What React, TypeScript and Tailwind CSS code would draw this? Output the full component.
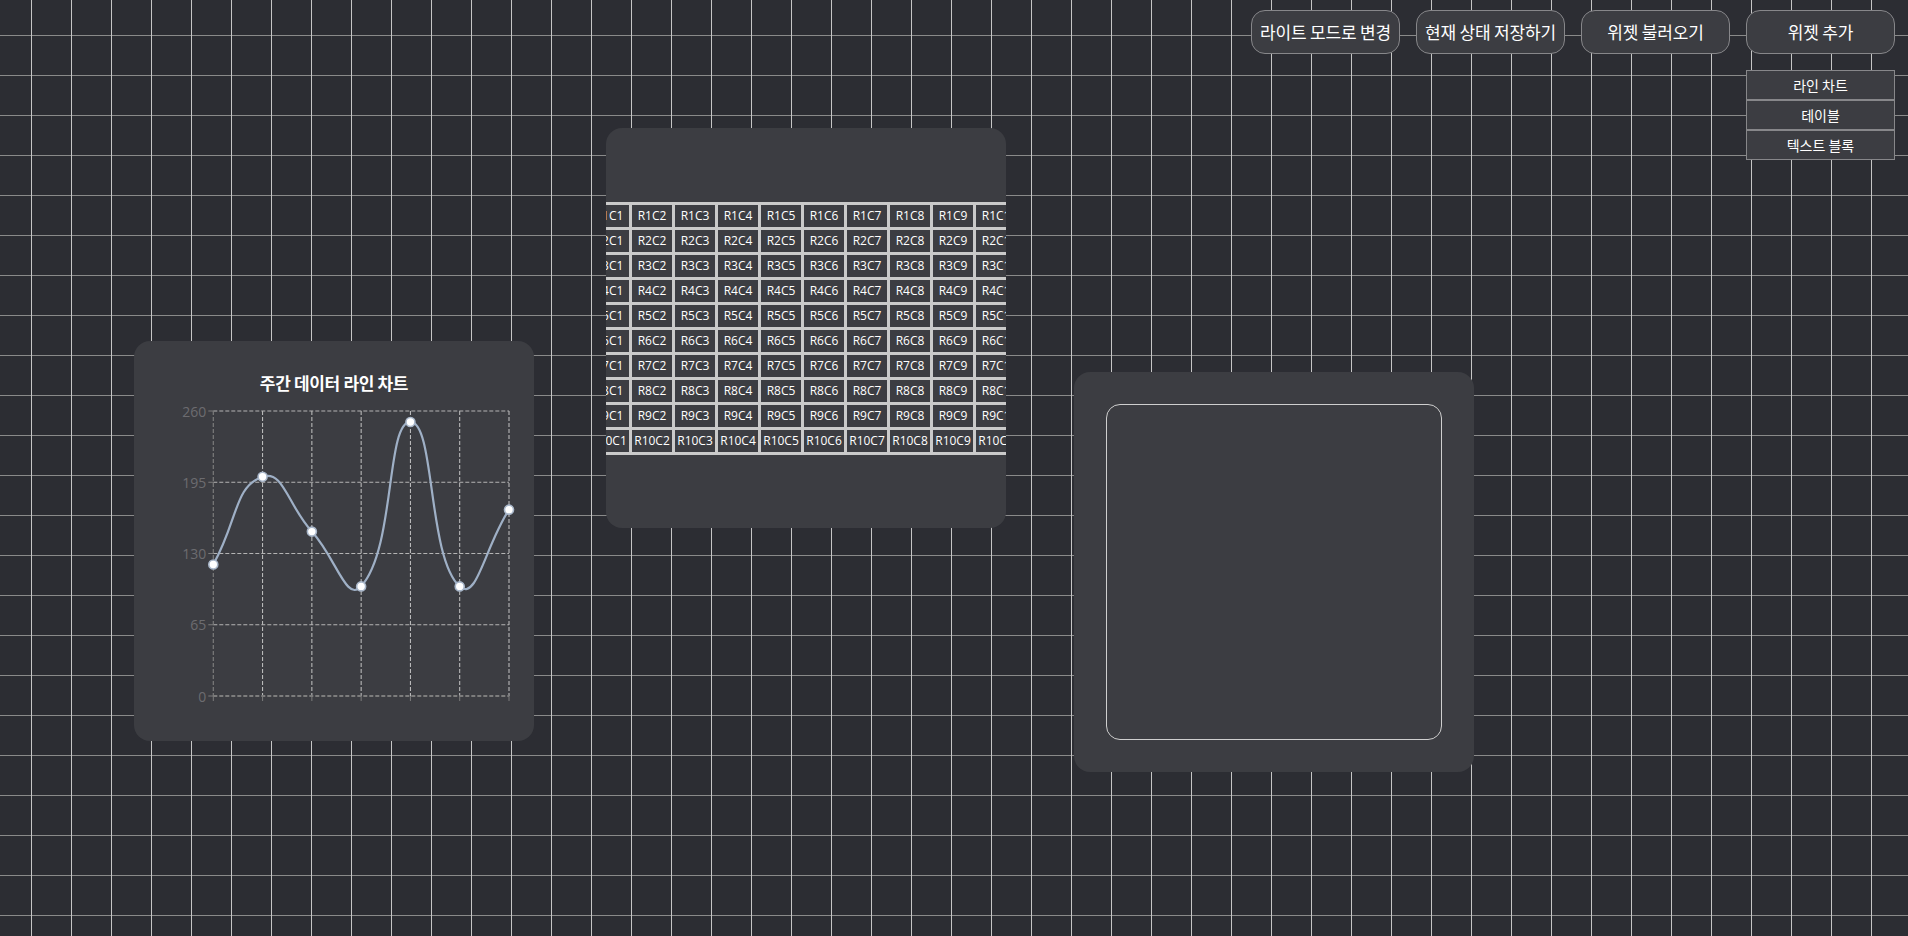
import React from 'react';

const WEEK_DATA = [120, 200, 150, 100, 250, 100, 170];
const Y_TICKS = [0, 65, 130, 195, 260];

// plot box inside the chart svg (svg sits under the title)
const PLOT = { left: 79.3, right: 375, top: 14, bottom: 299 };

type Pt = [number, number];

function smoothPath(pts: Pt[], smooth = 0.5) {
  const cps = pts.map((p, i) => {
    const prev = pts[i - 1] ?? p;
    const next = pts[i + 1] ?? p;
    const vx = next[0] - prev[0];
    const vy = next[1] - prev[1];
    let d0 = Math.hypot(p[0] - prev[0], p[1] - prev[1]);
    let d1 = Math.hypot(p[0] - next[0], p[1] - next[1]);
    const sum = d0 + d1;
    if (sum) {
      d0 /= sum;
      d1 /= sum;
    }
    return {
      c0: [p[0] - vx * smooth * d0, p[1] - vy * smooth * d0] as Pt,
      c1: [p[0] + vx * smooth * d1, p[1] + vy * smooth * d1] as Pt,
    };
  });
  let d = `M${pts[0][0]},${pts[0][1]}`;
  for (let i = 1; i < pts.length; i++) {
    const a = cps[i - 1].c1;
    const b = cps[i].c0;
    d += ` C${a[0]},${a[1]} ${b[0]},${b[1]} ${pts[i][0]},${pts[i][1]}`;
  }
  return d;
}

const LineChartWidget: React.FC = () => {
  const step = (PLOT.right - PLOT.left) / (WEEK_DATA.length - 1);
  const yOf = (v: number) => PLOT.bottom - (v / 260) * (PLOT.bottom - PLOT.top);
  const xs = WEEK_DATA.map((_, i) => PLOT.left + i * step);
  const pts: Pt[] = WEEK_DATA.map((v, i) => [xs[i], yOf(v)]);

  return (
    <div className="absolute left-[134px] top-[341px] w-[400px] h-[400px] rounded-2xl bg-[#3c3d42] flex flex-col">
      <div className="pt-[30px] h-[56px] text-center text-[17px] leading-[24px] font-bold tracking-[-0.02em] text-white">
        주간 데이터 라인 차트
      </div>
      <svg width="400" height="344" className="block">
        {/* vertical split lines */}
        {xs.slice(1).map((x) => (
          <line key={`v${x}`} x1={x} y1={PLOT.top} x2={x} y2={PLOT.bottom} stroke="#c4c4c4" strokeWidth="1" strokeDasharray="4 2" />
        ))}
        {/* horizontal split lines */}
        {Y_TICKS.slice(1).map((t) => (
          <line key={`h${t}`} x1={PLOT.left} y1={yOf(t)} x2={PLOT.right} y2={yOf(t)} stroke="#b4b4b4" strokeWidth="1" strokeDasharray="4 2" />
        ))}
        {/* axes */}
        <line x1={PLOT.left} y1={PLOT.top} x2={PLOT.left} y2={PLOT.bottom} stroke="#7c7c7c" strokeWidth="1.2" strokeDasharray="4 2" />
        <line x1={PLOT.left} y1={PLOT.bottom} x2={PLOT.right} y2={PLOT.bottom} stroke="#7c7c7c" strokeWidth="2" strokeDasharray="4 2" />
        {Y_TICKS.map((t) => (
          <line key={`yt${t}`} x1={PLOT.left - 5} y1={yOf(t)} x2={PLOT.left} y2={yOf(t)} stroke="#7c7c7c" strokeWidth="1" />
        ))}
        {xs.map((x) => (
          <line key={`xt${x}`} x1={x} y1={PLOT.bottom} x2={x} y2={PLOT.bottom + 5} stroke="#7c7c7c" strokeWidth="1" />
        ))}
        {Y_TICKS.map((t) => (
          <text
            key={`yl${t}`}
            x={PLOT.left - 7}
            y={yOf(t)}
            textAnchor="end"
            dominantBaseline="central"
            fill="#6c6c70"
            fontSize="14"
            fontFamily="'Open Sans', 'Noto Sans', sans-serif"
          >
            {t}
          </text>
        ))}
        <path d={smoothPath(pts)} fill="none" stroke="#9fb0c6" strokeWidth="2.2" />
        {pts.map(([x, y], i) => (
          <circle key={i} cx={x} cy={y} r="4.5" fill="#ffffff" stroke="#a9b7ca" strokeWidth="1.6" />
        ))}
      </svg>
    </div>
  );
};

const ROWS = Array.from({ length: 10 }, (_, i) => i + 1);
const COLS = Array.from({ length: 10 }, (_, i) => i + 1);

const TableWidget: React.FC = () => (
  <div className="absolute left-[606px] top-[128px] w-[400px] h-[400px] rounded-2xl bg-[#3c3d42] overflow-hidden flex items-center justify-center">
    <table className="shrink-0 border-separate border-spacing-[3px] bg-[#cacaca] font-['Open_Sans','Noto_Sans',sans-serif] text-[12px] text-white">
      <tbody>
        {ROWS.map((r) => (
          <tr key={r}>
            {COLS.map((c) => (
              <td
                key={c}
                className={`${c === 10 ? 'w-[47px]' : 'w-[40px]'} h-[22px] p-0 bg-[#3c3d42] text-center whitespace-nowrap leading-[22px]`}
              >
                {`R${r}C${c}`}
              </td>
            ))}
          </tr>
        ))}
      </tbody>
    </table>
  </div>
);

const TextBlockWidget: React.FC = () => (
  <div className="absolute left-[1074px] top-[372px] w-[400px] h-[400px] rounded-2xl bg-[#3c3d42] p-[32px]">
    <div className="w-full h-full rounded-[14px] border border-[#cfcfcf]" />
  </div>
);

const toolbarButton =
  'w-[149px] h-[44px] rounded-[14px] border border-[#87878a] bg-[#3c3d42] text-white text-[17px] tracking-[-0.01em] flex items-center justify-center';

const menuItems = ['라인 차트', '테이블', '텍스트 블록'];

export default function App() {
  return (
    <div className="relative w-full min-h-screen h-[936px] overflow-hidden bg-[#2c2d33] bg-[linear-gradient(to_right,#c6c6c6_1px,transparent_1px),linear-gradient(to_bottom,#8a8a8a_1px,transparent_1px)] bg-size-[40px_40px] bg-position-[31px_35px] font-['Noto_Sans_CJK_KR','Noto_Sans',sans-serif]">
      {/* Toolbar */}
      <div className="relative z-10 flex justify-end gap-[16px] pt-[10px] pr-[13px]">
        <button className={toolbarButton}>라이트 모드로 변경</button>
        <button className={toolbarButton}>현재 상태 저장하기</button>
        <button className={toolbarButton}>위젯 불러오기</button>
        <div className="relative">
          <button className={toolbarButton}>위젯 추가</button>
          <div className="absolute left-0 top-[60px] w-[149px] flex flex-col">
            {menuItems.map((m) => (
              <div
                key={m}
                className="h-[30px] border border-[#87878a] bg-[#3c3d42] text-white text-[14px] flex items-center justify-center"
              >
                {m}
              </div>
            ))}
          </div>
        </div>
      </div>

      {/* Widgets */}
      <LineChartWidget />
      <TableWidget />
      <TextBlockWidget />
    </div>
  );
}
